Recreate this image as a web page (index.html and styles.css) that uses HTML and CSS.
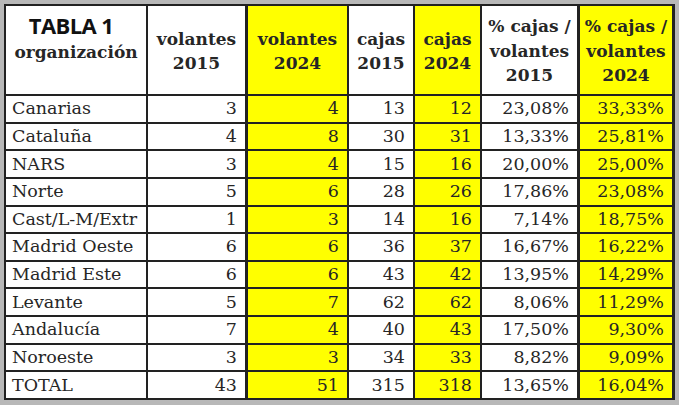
FILE: index.html
```html
<!DOCTYPE html>
<html lang="es">
<head>
<meta charset="utf-8">
<title>Tabla 1</title>
<link rel="stylesheet" href="styles.css">
</head>
<body>
<div class="grid">
  <div class="h first"><span class="title">TABLA 1</span><span class="sub">organización</span></div>
  <div class="h k2">volantes<br>2015</div>
  <div class="h k3 y">volantes<br>2024</div>
  <div class="h k4">cajas<br>2015</div>
  <div class="h k5 y">cajas<br>2024</div>
  <div class="h k6">% cajas /<br>volantes<br>2015</div>
  <div class="h k7 y">% cajas /<br>volantes<br>2024</div>

  <div class="c name">Canarias</div><div class="c k2">3</div><div class="c k3 y">4</div><div class="c k4">13</div><div class="c k5 y">12</div><div class="c k6">23,08%</div><div class="c k7 y">33,33%</div>
  <div class="c name">Cataluña</div><div class="c k2">4</div><div class="c k3 y">8</div><div class="c k4">30</div><div class="c k5 y">31</div><div class="c k6">13,33%</div><div class="c k7 y">25,81%</div>
  <div class="c name">NARS</div><div class="c k2">3</div><div class="c k3 y">4</div><div class="c k4">15</div><div class="c k5 y">16</div><div class="c k6">20,00%</div><div class="c k7 y">25,00%</div>
  <div class="c name">Norte</div><div class="c k2">5</div><div class="c k3 y">6</div><div class="c k4">28</div><div class="c k5 y">26</div><div class="c k6">17,86%</div><div class="c k7 y">23,08%</div>
  <div class="c name">Cast/L-M/Extr</div><div class="c k2">1</div><div class="c k3 y">3</div><div class="c k4">14</div><div class="c k5 y">16</div><div class="c k6">7,14%</div><div class="c k7 y">18,75%</div>
  <div class="c name">Madrid Oeste</div><div class="c k2">6</div><div class="c k3 y">6</div><div class="c k4">36</div><div class="c k5 y">37</div><div class="c k6">16,67%</div><div class="c k7 y">16,22%</div>
  <div class="c name">Madrid Este</div><div class="c k2">6</div><div class="c k3 y">6</div><div class="c k4">43</div><div class="c k5 y">42</div><div class="c k6">13,95%</div><div class="c k7 y">14,29%</div>
  <div class="c name">Levante</div><div class="c k2">5</div><div class="c k3 y">7</div><div class="c k4">62</div><div class="c k5 y">62</div><div class="c k6">8,06%</div><div class="c k7 y">11,29%</div>
  <div class="c name">Andalucía</div><div class="c k2">7</div><div class="c k3 y">4</div><div class="c k4">40</div><div class="c k5 y">43</div><div class="c k6">17,50%</div><div class="c k7 y">9,30%</div>
  <div class="c name">Noroeste</div><div class="c k2">3</div><div class="c k3 y">3</div><div class="c k4">34</div><div class="c k5 y">33</div><div class="c k6">8,82%</div><div class="c k7 y">9,09%</div>
  <div class="c name">TOTAL</div><div class="c k2">43</div><div class="c k3 y">51</div><div class="c k4">315</div><div class="c k5 y">318</div><div class="c k6">13,65%</div><div class="c k7 y">16,04%</div>
</div>
</body>
</html>
```

FILE: styles.css
```css
html, body {
  margin: 0;
  padding: 0;
  background: #b8b8b8;
}
body {
  padding: 4px;
  width: 679px;
  height: 405px;
  box-sizing: border-box;
  overflow: hidden;
}
.grid {
  display: grid;
  grid-template-columns: 142px 100px 101px 66px 67px 98px 95px;
  grid-template-rows: 90px repeat(11, 27.64px);
  width: max-content;
  border-left: 2px solid #222;
  border-top: 2px solid #222;
  background: #fff;
}
.h, .c {
  box-sizing: border-box;
  border-right: 2px solid #222;
  border-bottom: 2px solid #222;
  background: #fff;
  color: #262626;
}
.k2, .k6, .k7 { border-right-width: 3px; }
.y { background: #ffff00; }
.h {
  font-family: "DejaVu Serif", serif;
  font-weight: bold;
  font-size: 17px;
  line-height: 24.5px;
  text-align: center;
  display: flex;
  align-items: center;
  justify-content: center;
  padding-top: 2px;
}
.h.first {
  flex-direction: column;
  justify-content: flex-start;
  align-items: center;
  padding-top: 5px;
}
.title {
  font-family: "Open Sans", "Noto Sans", sans-serif;
  font-weight: bold;
  font-size: 22px;
  line-height: 29px;
  letter-spacing: -0.6px;
  color: #111;
  padding-right: 10px;
}
.sub {
  font-size: 17px;
  line-height: 20px;
  margin-top: 2px;
}
.c {
  font-family: "DejaVu Serif", serif;
  font-size: 17.5px;
  line-height: 25px;
  text-align: right;
  padding-right: 8px;
  white-space: nowrap;
  display: flex;
  align-items: center;
  justify-content: flex-end;
}
.c.name {
  justify-content: flex-start;
  padding-left: 6px;
  padding-right: 0;
}
```
